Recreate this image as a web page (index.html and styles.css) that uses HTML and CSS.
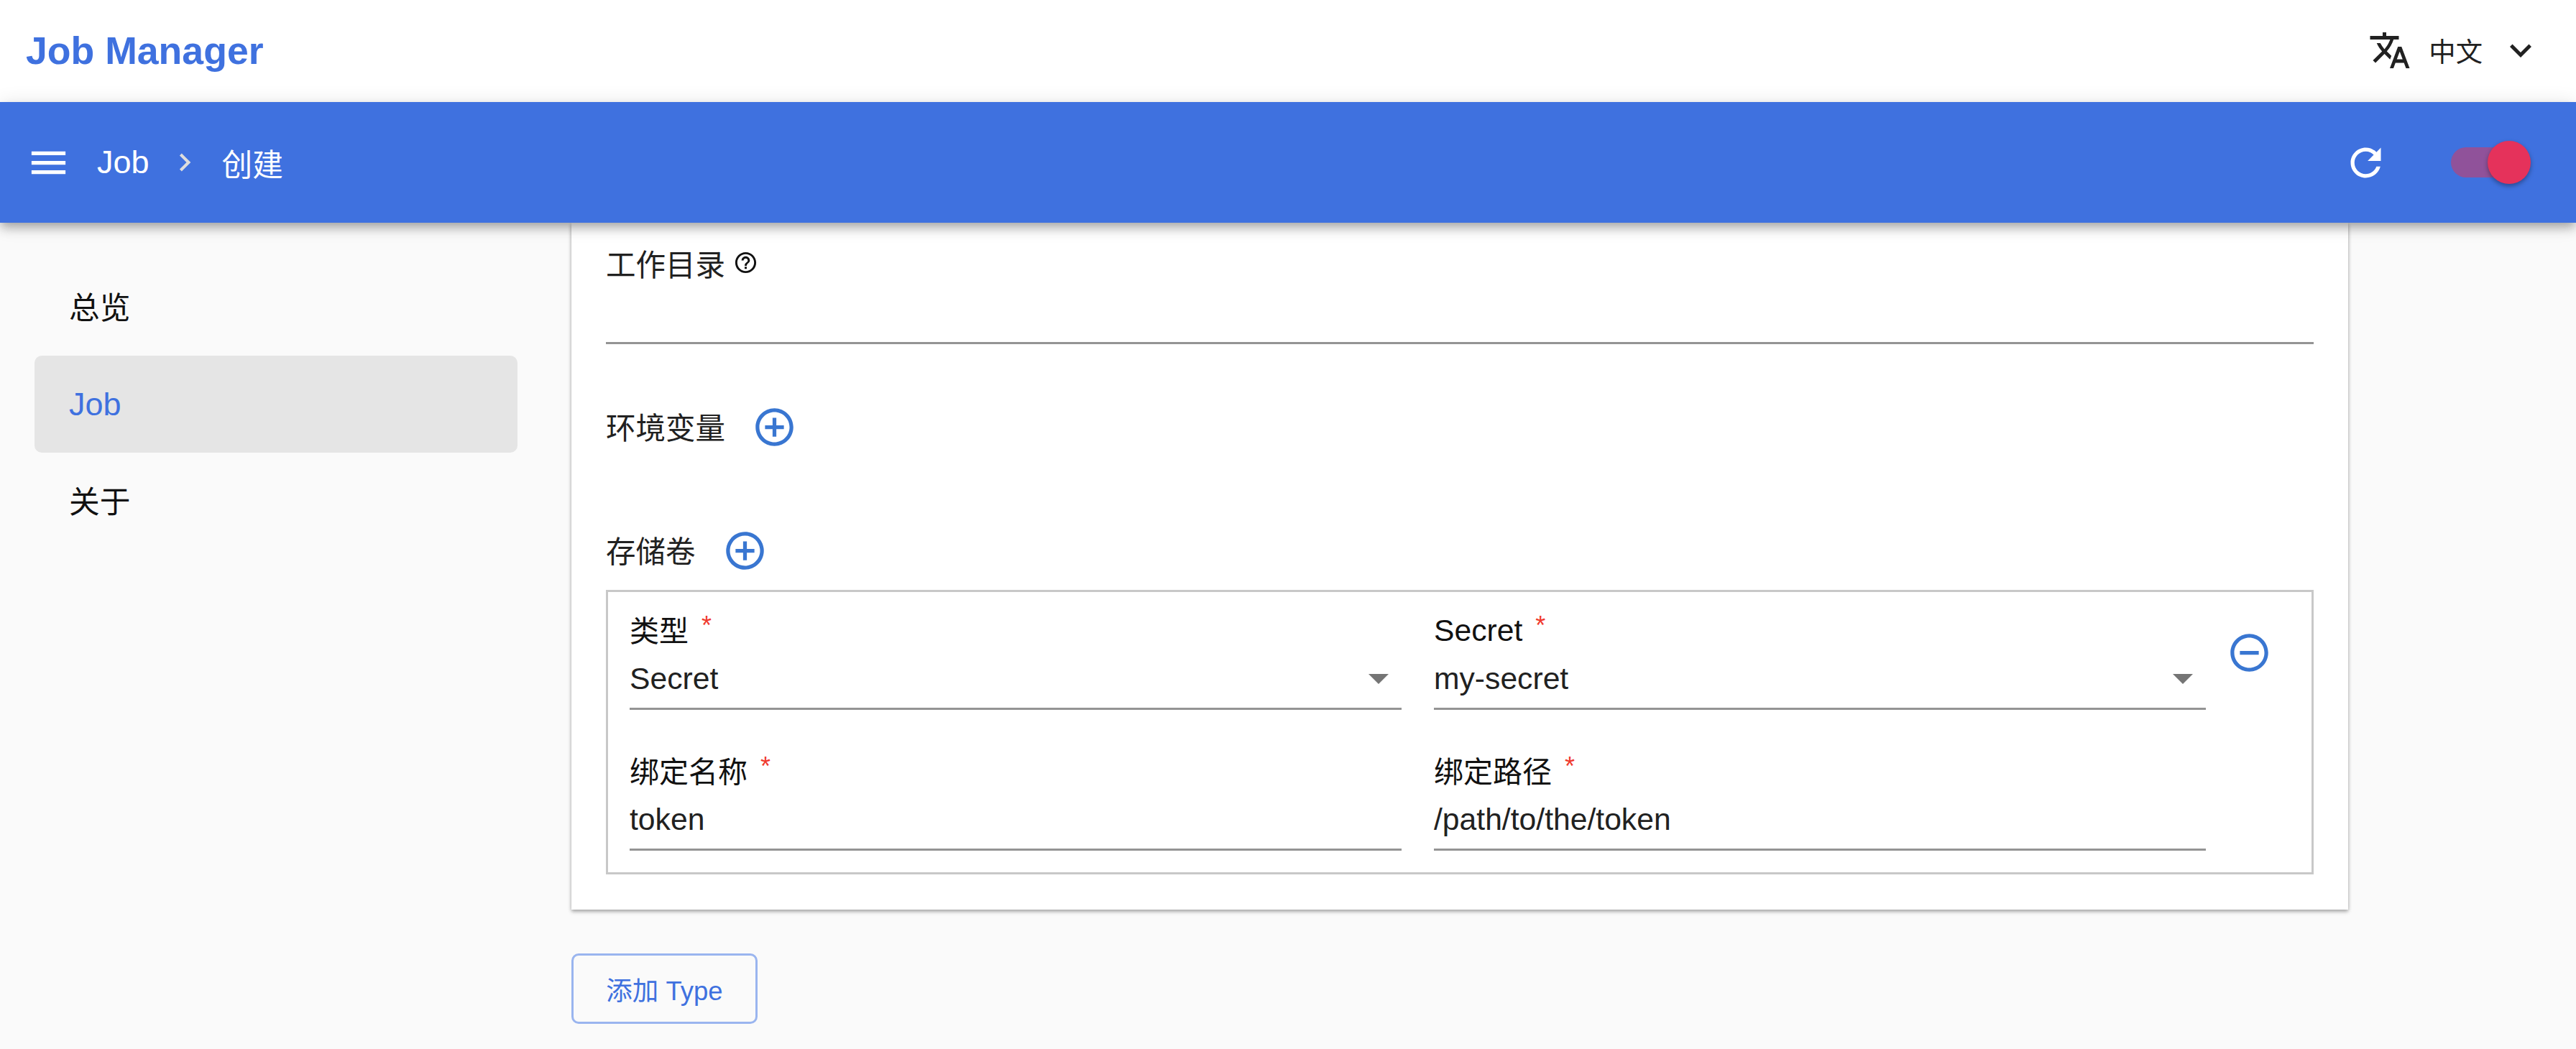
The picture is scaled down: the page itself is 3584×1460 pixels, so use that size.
FILE: index.html
```html
<!DOCTYPE html>
<html lang="zh">
<head>
<meta charset="utf-8">
<title>Job Manager</title>
<link rel="stylesheet" href="styles.css">
</head>
<body>
<header class="topbar">
  <div class="logo">Job Manager</div>
  <div class="lang">
    <svg class="icon-translate" viewBox="0 0 24 24"><path d="M12.87 15.07l-2.54-2.51.03-.03c1.74-1.94 2.98-4.17 3.71-6.53H17V4h-7V2H8v2H1v1.99h11.17C11.5 7.92 10.44 9.75 9 11.35 8.07 10.32 7.3 9.19 6.69 8h-2c.73 1.63 1.73 3.17 2.98 4.56l-5.09 5.02L4 19l5-5 3.11 3.11.76-2.04zM18.5 10h-2L12 22h2l1.12-3h4.75L21 22h2l-4.5-12zm-2.62 7l1.62-4.33L19.12 17h-3.24z"/></svg>
    <span class="lang-name">中文</span>
    <svg class="icon-chevron" viewBox="0 0 24 24"><path d="M16.59 8.59L12 13.17 7.41 8.59 6 10l6 6 6-6z"/></svg>
  </div>
</header>
<div class="appbar">
  <svg class="icon-menu" viewBox="0 0 24 24"><path d="M3 18h18v-2H3v2zm0-5h18v-2H3v2zm0-7v2h18V6H3z"/></svg>
  <nav class="crumbs">
    <span class="latin-nav">Job</span>
    <svg class="icon-crumb" viewBox="0 0 24 24"><path d="M10 6L8.59 7.41 13.17 12l-4.58 4.59L10 18l6-6z"/></svg>
    <span>创建</span>
  </nav>
  <div class="appbar-actions">
    <svg class="icon-refresh" viewBox="0 0 24 24"><path d="M17.65 6.35C16.2 4.9 14.21 4 12 4c-4.42 0-7.99 3.58-7.99 8s3.57 8 7.99 8c3.73 0 6.84-2.55 7.73-6h-2.08c-.82 2.33-3.04 4-5.65 4-3.31 0-6-2.69-6-6s2.69-6 6-6c1.66 0 3.14.69 4.22 1.78L13 11h7V4l-2.35 2.35z"/></svg>
    <div class="switch"><span class="switch-thumb"></span></div>
  </div>
</div>
<main class="main">
  <aside class="sidebar">
    <a class="nav-item nav-cjk">总览</a>
    <a class="nav-item nav-active"><span class="latin-nav">Job</span></a>
    <a class="nav-item nav-cjk">关于</a>
  </aside>
  <section class="content">
    <div class="card">
      <div class="workdir">
        <div class="workdir-label"><span>工作目录</span>
          <svg class="icon-help" viewBox="0 0 24 24"><path d="M11 18h2v-2h-2v2zm1-16C6.48 2 2 6.48 2 12s4.48 10 10 10 10-4.48 10-10S17.52 2 12 2zm0 18c-4.41 0-8-3.59-8-8s3.59-8 8-8 8 3.59 8 8-3.59 8-8 8zm0-14c-2.21 0-4 1.79-4 4h2c0-1.1.9-2 2-2s2 .9 2 2c0 2-3 1.75-3 5h2c0-2.25 3-2.5 3-5 0-2.21-1.79-4-4-4z"/></svg>
        </div>
        <div class="workdir-input"></div>
      </div>
      <div class="section-row env-row">
        <span>环境变量</span>
        <svg class="icon-round" viewBox="0 0 24 24"><path d="M13 7h-2v4H7v2h4v4h2v-4h4v-2h-4V7zm-1-5C6.48 2 2 6.48 2 12s4.48 10 10 10 10-4.48 10-10S17.52 2 12 2zm0 18c-4.41 0-8-3.59-8-8s3.59-8 8-8 8 3.59 8 8-3.59 8-8 8z"/></svg>
      </div>
      <div class="section-row volume-row">
        <span>存储卷</span>
        <svg class="icon-round" viewBox="0 0 24 24"><path d="M13 7h-2v4H7v2h4v4h2v-4h4v-2h-4V7zm-1-5C6.48 2 2 6.48 2 12s4.48 10 10 10 10-4.48 10-10S17.52 2 12 2zm0 18c-4.41 0-8-3.59-8-8s3.59-8 8-8 8 3.59 8 8-3.59 8-8 8z"/></svg>
      </div>
      <div class="volume">
        <div class="volume-fields">
          <div class="field">
            <div class="field-label"><span class="cjk-label">类型</span><span class="req">*</span></div>
            <div class="field-value"><span>Secret</span><span class="caret"></span></div>
          </div>
          <div class="field">
            <div class="field-label">Secret<span class="req">*</span></div>
            <div class="field-value"><span>my-secret</span><span class="caret"></span></div>
          </div>
          <div class="field">
            <div class="field-label"><span class="cjk-label">绑定名称</span><span class="req">*</span></div>
            <div class="field-value"><span>token</span></div>
          </div>
          <div class="field">
            <div class="field-label"><span class="cjk-label">绑定路径</span><span class="req">*</span></div>
            <div class="field-value"><span>/path/to/the/token</span></div>
          </div>
        </div>
        <svg class="icon-round icon-remove" viewBox="0 0 24 24"><path d="M7 11v2h10v-2H7zm5-9C6.48 2 2 6.48 2 12s4.48 10 10 10 10-4.48 10-10S17.52 2 12 2zm0 18c-4.41 0-8-3.59-8-8s3.59-8 8-8 8 3.59 8 8-3.59 8-8 8z"/></svg>
      </div>
    </div>
    <button class="add-type">添加 Type</button>
  </section>
</main>
</body>
</html>
```
FILE: styles.css
```css
* { box-sizing: border-box; }
html, body { margin: 0; height: 1460px; overflow: hidden; }
body {
  background: #fafafa;
  color: #212121;
  font-family: "Liberation Sans", "Noto Sans CJK SC", sans-serif;
  font-size: 42.67px;
}
svg { display: block; flex: none; fill: currentColor; }
.latin-nav { font-size: 45px; }

.topbar {
  height: 142px;
  background: #fff;
  display: flex;
  align-items: center;
  justify-content: space-between;
  padding: 0 47px 0 36px;
}
.logo { color: #3f71df; font-size: 53.6px; font-weight: 700; margin-top: -2px; }
.lang { display: flex; align-items: center; margin-top: -2px; }
.icon-translate { width: 60px; height: 60px; color: #212121; }
.lang-name { font-size: 37.33px; margin-left: 24px; }
.icon-chevron { width: 60px; height: 60px; margin-left: 23px; color: #212121; }

.appbar {
  position: relative;
  z-index: 2;
  height: 168px;
  background: #3f71df;
  color: #fff;
  display: flex;
  align-items: center;
  padding: 0 63px 0 36px;
  box-shadow: 0 5px 12px -3px rgba(0,0,0,.2), 0 10px 13px 0 rgba(0,0,0,.14), 0 3px 26px 0 rgba(0,0,0,.12);
}
.icon-menu { width: 63px; height: 63px; }
.crumbs { display: flex; align-items: center; margin-left: 36px; }
.icon-crumb { width: 50px; height: 50px; margin: 0 27px 0 24px; color: #ddd; }
.appbar-actions { margin-left: auto; display: flex; align-items: center; }
.icon-refresh { width: 63px; height: 63px; }
.switch {
  position: relative;
  width: 102px;
  height: 42px;
  margin: 0 9px 0 87px;
  border-radius: 21px;
  background: #90529a;
}
.switch-thumb {
  position: absolute;
  top: -9px;
  right: -9px;
  width: 60px;
  height: 60px;
  border-radius: 50%;
  background: #e5325b;
  box-shadow: 0 3px 6px rgba(0,0,0,.35);
}

.main { display: flex; height: 1150px; }
.sidebar { width: 795px; flex: none; padding: 50px 75px 0 48px; }
.nav-item {
  display: flex;
  align-items: center;
  height: 135px;
  padding-left: 48px;
  border-radius: 10px;
  color: #111;
}
.nav-cjk { padding-bottom: 4px; }
.nav-active { background: #e5e5e5; color: #3f71df; }

.content { width: 2472px; flex: none; }
.card {
  background: #fff;
  padding: 28px 48px 49px;
  box-shadow: 0 3px 5px rgba(0,0,0,.3), 0 0 5px rgba(0,0,0,.12);
}
.workdir-label { display: flex; align-items: center; height: 60px; font-size: 41.5px; padding-bottom: 4px; }
.icon-help { width: 35px; height: 35px; margin: 0 0 2px 11px; color: #111; }
.workdir-input { height: 81px; border-bottom: 3px solid #949494; }
.section-row { display: flex; align-items: center; height: 60px; font-size: 41.5px; }
.section-row span { padding-bottom: 3px; }
.section-row .icon-round { margin-left: 37px; }
.env-row { margin-top: 85px; }
.volume-row { margin-top: 112px; }
.icon-round { width: 63px; height: 63px; color: #3976d1; }

.volume {
  display: flex;
  align-items: flex-start;
  margin-top: 25px;
  height: 396px;
  width: 2376px;
  border: 3px solid #c8c8c8;
  padding: 26px 0 0 30px;
}
.volume-fields {
  display: grid;
  grid-template-columns: 1074px 1074px;
  column-gap: 45px;
  row-gap: 58px;
}
.field-label { height: 54px; display: flex; align-items: center; color: #111; }
.cjk-label { font-size: 41px; padding-bottom: 4px; }
.req {
  color: #f03a2e;
  font-size: 36px;
  margin-left: 18px;
  align-self: flex-start;
  line-height: 40px;
  margin-top: 1px;
}
.field-value {
  height: 84px;
  display: flex;
  align-items: center;
  justify-content: space-between;
  border-bottom: 3px solid #949494;
  padding-right: 18px;
}
.caret {
  width: 0;
  height: 0;
  border-left: 14px solid transparent;
  border-right: 14px solid transparent;
  border-top: 14px solid #757575;
}
.icon-remove { margin: 27px 0 0 29px; }

.add-type {
  display: block;
  margin-top: 61px;
  width: 259px;
  height: 98px;
  padding: 0;
  background: transparent;
  border: 3px solid #9ab5ef;
  border-radius: 10px;
  color: #3f71df;
  font: inherit;
  font-size: 36.5px;
}
```
